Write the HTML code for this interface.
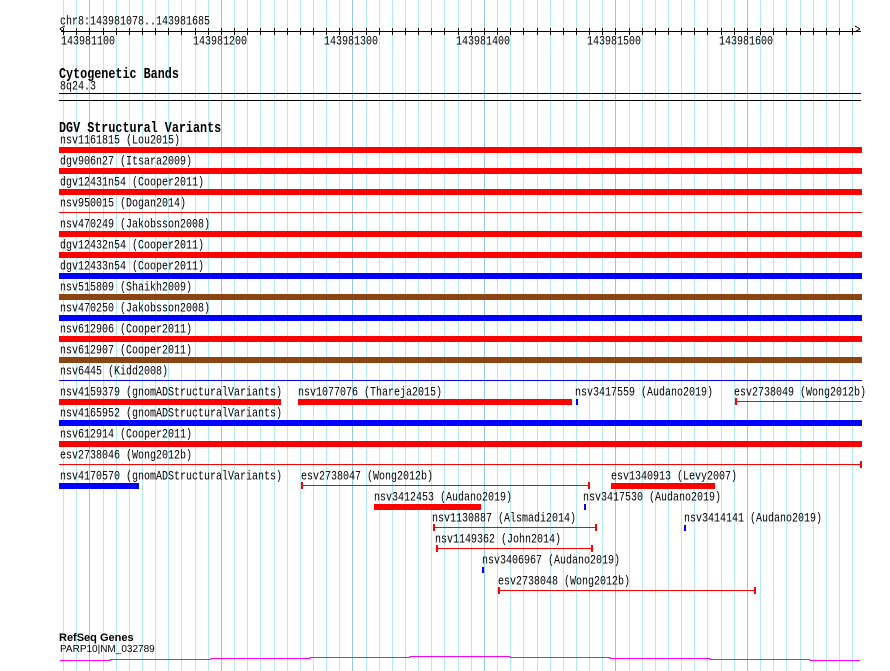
<!DOCTYPE html>
<html><head><meta charset="utf-8">
<style>
*{margin:0;padding:0}
body{width:890px;height:671px;background:#fff;position:relative;overflow:hidden;font-family:"Liberation Mono","DejaVu Sans Mono",monospace;font-size:10px;color:#000}
.g{position:absolute;top:0;height:671px;width:1px;background:#b2ecf2}
.gm{background:#94c8e8}
.t{position:absolute;line-height:10px;white-space:pre;transform:scaleY(1.25);transform-origin:50% 50%}
.b{font-weight:bold;font-size:11.75px}
.r{position:absolute}
</style></head><body>
<div id="grid"></div>
<div class="t" style="left:60px;top:18px">chr8:143981078..143981685</div>
<div class="r" style="left:61px;top:31px;width:800px;height:1px;background:#000"></div>
<div class="t" style="left:59px;top:26px;font-size:11px">&lt;</div>
<div class="t" style="left:854px;top:26px;font-size:11px">&gt;</div>
<div id="ticks"></div>
<div class="t" style="left:61px;top:38px">143981100</div>
<div class="t" style="left:193px;top:38px">143981200</div>
<div class="t" style="left:324px;top:38px">143981300</div>
<div class="t" style="left:456px;top:38px">143981400</div>
<div class="t" style="left:587px;top:38px">143981500</div>
<div class="t" style="left:719px;top:38px">143981600</div>

<div class="t b" style="left:59px;top:69px">Cytogenetic Bands</div>
<div class="t" style="left:60px;top:83px">8q24.3</div>
<div class="r" style="left:59px;top:93px;width:802px;height:1px;background:#000"></div>
<div class="r" style="left:59px;top:100px;width:802px;height:1px;background:#000"></div>

<div class="t b" style="left:59px;top:123px">DGV Structural Variants</div>
<div id="feat"></div>

<div class="t" style="left:59px;top:633px;font-family:'Liberation Sans',sans-serif;font-size:11px;font-weight:bold;transform:none">RefSeq Genes</div>
<div class="t" style="left:60px;top:645px;font-family:'Liberation Sans',sans-serif;font-size:10px;transform:none">PARP10|NM_032789</div>
<svg class="r" style="left:0;top:0" width="890" height="671"><polyline fill="none" stroke="#ff00ff" stroke-width="1" points="60,660.5 110,660.5 110,659.5 211,659.5 211,658.5 310,658.5 310,657.5 410,657.5 410,656.5 510,656.5 510,657.5 610,657.5 610,658.5 710,658.5 710,659.5 810,659.5 810,660.5 860,660.5"/></svg>

<script>
var g='',x;
for(var k=-2;k<60;k++){x=89.4+k*13.15;if(x>=62&&x<=862){var m=(k%10===0);g+='<div class="g'+(m?' gm':'')+'" style="left:'+Math.round(x)+'px"></div>';}}
document.getElementById('grid').innerHTML=g;
var tk='';
for(var k=-2;k<60;k++){x=89.4+k*13.15;if(x>=62&&x<=858)tk+='<div class="r" style="left:'+Math.round(x)+'px;top:28px;width:1px;height:7px;background:#000"></div>';}
document.getElementById('ticks').innerHTML=tk;
var R='#ff0000',B='#0000ff',N='#8b4513';
var rows=[
[140,[[60,'nsv1161815 (Lou2015)']],[['T',59,862,R]]],
[161,[[60,'dgv906n27 (Itsara2009)']],[['T',59,862,R]]],
[182,[[60,'dgv12431n54 (Cooper2011)']],[['T',59,862,R]]],
[203,[[60,'nsv950015 (Dogan2014)']],[['L',59,862,R]]],
[224,[[60,'nsv470249 (Jakobsson2008)']],[['T',59,862,R]]],
[245,[[60,'dgv12432n54 (Cooper2011)']],[['T',59,862,R]]],
[266,[[60,'dgv12433n54 (Cooper2011)']],[['T',59,862,B]]],
[287,[[60,'nsv515809 (Shaikh2009)']],[['T',59,862,N]]],
[308,[[60,'nsv470250 (Jakobsson2008)']],[['T',59,862,B]]],
[329,[[60,'nsv612906 (Cooper2011)']],[['T',59,862,R]]],
[350,[[60,'nsv612907 (Cooper2011)']],[['T',59,862,N]]],
[371,[[60,'nsv6445 (Kidd2008)']],[['L',59,862,B]]],
[392,[[60,'nsv4159379 (gnomADStructuralVariants)'],[298,'nsv1077076 (Thareja2015)'],[575,'nsv3417559 (Audano2019)'],[734,'esv2738049 (Wong2012b)']],[['T',59,281,R],['T',298,572,R],['T',576,578,B],['C',735,862,R,1,0]]],
[413,[[60,'nsv4165952 (gnomADStructuralVariants)']],[['T',59,862,B]]],
[434,[[60,'nsv612914 (Cooper2011)']],[['T',59,862,R]]],
[455,[[60,'esv2738046 (Wong2012b)']],[['C',59,862,R,0,1]]],
[476,[[60,'nsv4170570 (gnomADStructuralVariants)'],[301,'esv2738047 (Wong2012b)'],[611,'esv1340913 (Levy2007)']],[['T',59,139,B],['C',301,590,R,1,1],['T',611,715,R]]],
[497,[[374,'nsv3412453 (Audano2019)'],[583,'nsv3417530 (Audano2019)']],[['T',374,481,R],['T',584,586,B]]],
[518,[[432,'nsv1130887 (Alsmadi2014)'],[684,'nsv3414141 (Audano2019)']],[['C',433,597,R,1,1],['T',684,686,B]]],
[539,[[435,'nsv1149362 (John2014)']],[['C',436,593,R,1,1]]],
[560,[[482,'nsv3406967 (Audano2019)']],[['T',482,484,B]]],
[581,[[498,'esv2738048 (Wong2012b)']],[['C',498,756,R,1,1]]]
];
var h='';
rows.forEach(function(r){var y=r[0];
r[1].forEach(function(l){h+='<div class="t" style="left:'+l[0]+'px;top:'+(y-3)+'px">'+l[1]+'</div>';});
r[2].forEach(function(f){var x1=f[1],x2=f[2],c=f[3];
if(f[0]==='T')h+='<div class="r" style="left:'+x1+'px;top:'+(y+7)+'px;width:'+(x2-x1)+'px;height:6px;background:'+c+'"></div>';
else{h+='<div class="r" style="left:'+x1+'px;top:'+(y+9)+'px;width:'+(x2-x1)+'px;height:1px;background:'+c+'"></div>';
if(f[0]==='C'){if(f[4])h+='<div class="r" style="left:'+x1+'px;top:'+(y+6)+'px;width:2px;height:7px;background:'+c+'"></div>';
if(f[5])h+='<div class="r" style="left:'+(x2-2)+'px;top:'+(y+6)+'px;width:2px;height:7px;background:'+c+'"></div>';}}
});});
document.getElementById('feat').innerHTML=h;
</script>
</body></html>
